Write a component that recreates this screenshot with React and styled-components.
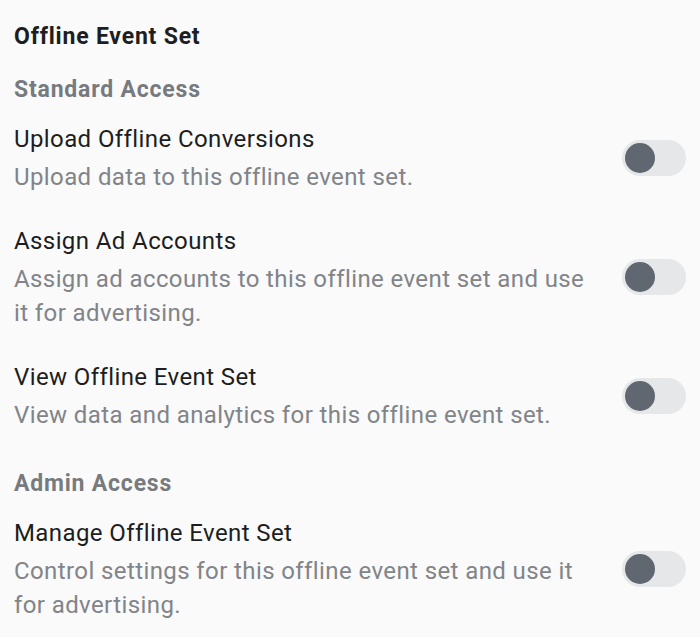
import styled, { createGlobalStyle } from "styled-components";

const GlobalStyle = createGlobalStyle`
  body {
    margin: 0;
    background: #fafafa;
    font-family: Roboto, "Liberation Sans", sans-serif;
  }
`;

const sections = [
  {
    name: "Standard Access",
    items: [
      {
        title: "Upload Offline Conversions",
        desc: "Upload data to this offline event set.",
      },
      {
        title: "Assign Ad Accounts",
        desc: "Assign ad accounts to this offline event set and use it for advertising.",
      },
      {
        title: "View Offline Event Set",
        desc: "View data and analytics for this offline event set.",
      },
    ],
  },
  {
    name: "Admin Access",
    items: [
      {
        title: "Manage Offline Event Set",
        desc: "Control settings for this offline event set and use it for advertising.",
      },
    ],
  },
];

const Toggle = ({ on }) => (
  <Track on={on ? 1 : 0}>
    <Knob />
  </Track>
);

const App = () => {
  return (
    <>
      <GlobalStyle />
      <PageDiv>
        <Heading>Offline Event Set</Heading>
        {sections.map((section) => (
          <SectionDiv key={section.name}>
            <SectionTitle>{section.name}</SectionTitle>
            <ItemList>
              {section.items.map((item) => (
                <ItemRow key={item.title}>
                  <TextDiv>
                    <ItemTitle>{item.title}</ItemTitle>
                    <ItemDesc>{item.desc}</ItemDesc>
                  </TextDiv>
                  <Toggle />
                </ItemRow>
              ))}
            </ItemList>
          </SectionDiv>
        ))}
      </PageDiv>
    </>
  );
};

const PageDiv = styled.div`
  padding: 20px 14px 0 14px;
  display: flex;
  flex-direction: column;
  gap: 19px;
`;
const Heading = styled.div`
  font-size: 23px;
  font-weight: bold;
  line-height: 34px;
  letter-spacing: 0.8px;
  color: #1c1e21;
`;
const SectionDiv = styled.div`
  display: flex;
  flex-direction: column;
  gap: 15px;
  & + & {
    margin-top: 16px;
  }
`;
const SectionTitle = styled.div`
  font-size: 23px;
  font-weight: bold;
  line-height: 34px;
  letter-spacing: 0.8px;
  color: #777a7e;
`;
const ItemList = styled.div`
  display: flex;
  flex-direction: column;
  gap: 30px;
`;
const ItemRow = styled.div`
  display: flex;
  align-items: center;
  justify-content: space-between;
`;
const TextDiv = styled.div`
  width: 582px;
`;
const ItemTitle = styled.div`
  font-size: 24px;
  line-height: 34px;
  letter-spacing: 0.4px;
  color: #1c1e21;
  margin-bottom: 4px;
`;
const ItemDesc = styled.div`
  font-size: 24px;
  line-height: 34px;
  letter-spacing: 0.4px;
  color: #818488;
`;
const Track = styled.div`
  width: 64px;
  height: 36px;
  border-radius: 18px;
  background: ${(p) => (p.on ? "#1877f2" : "#e6e7e9")};
  display: flex;
  align-items: center;
  justify-content: ${(p) => (p.on ? "flex-end" : "flex-start")};
  padding: 0 3px;
  box-sizing: border-box;
  flex-shrink: 0;
`;
const Knob = styled.div`
  width: 30px;
  height: 30px;
  border-radius: 50%;
  background: #606770;
`;

export default App;
